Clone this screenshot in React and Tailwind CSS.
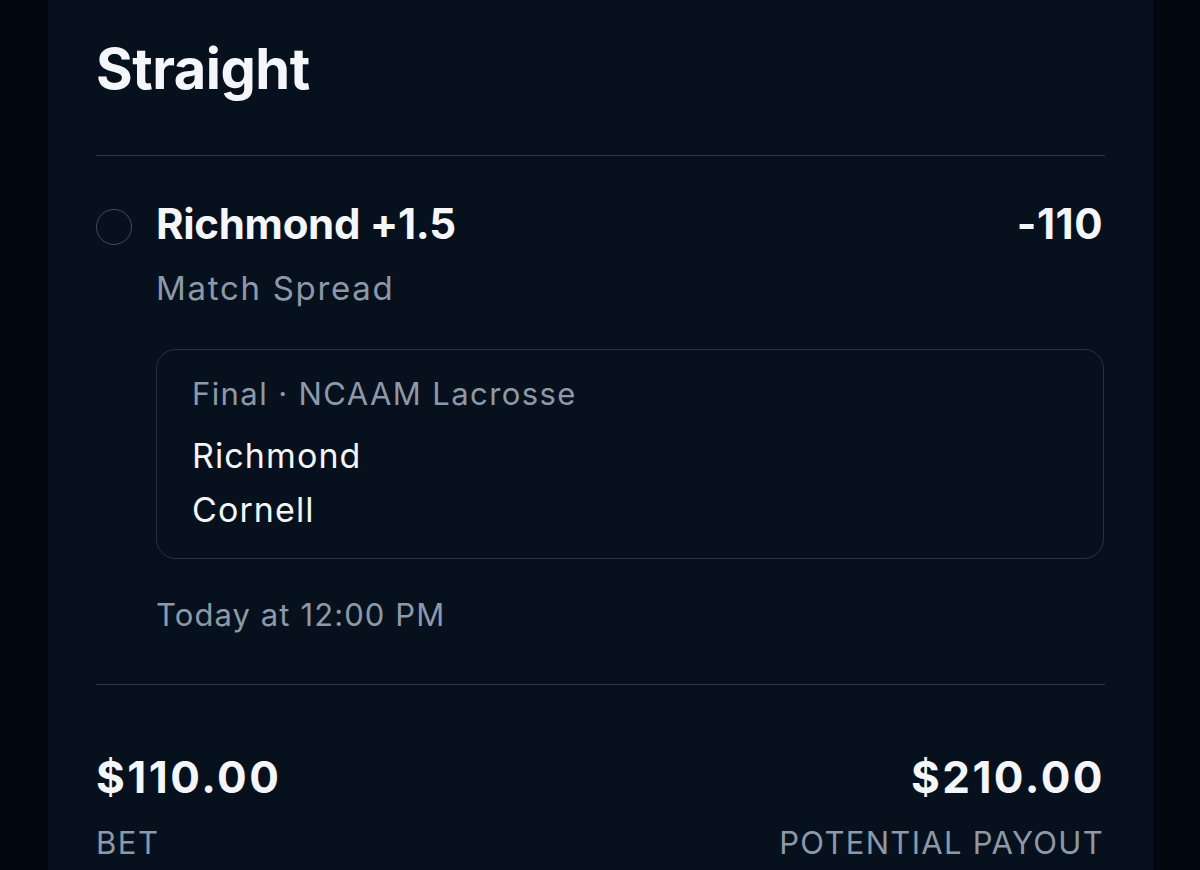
export default function App() {
  const font = { fontFamily: "Inter, 'Noto Sans', sans-serif" };
  return (
    <div className="w-[1200px] h-[870px] overflow-hidden bg-[#02070f] flex" style={font}>
      <div className="ml-[48px] w-[1105px] h-full bg-[#07111e] px-[48px] pt-[41px] flex flex-col">
        <div className="text-[56px] leading-[56px] font-bold text-[#f4f6f9] tracking-[-0.5px]">Straight</div>
        <div className="mt-[58px] h-px bg-[#2b3441]" />
        <div className="mt-[44px] flex items-start">
          <div className="mt-[9px] w-[36px] h-[36px] rounded-full border-[1.5px] border-[#424c5b] shrink-0" />
          <div className="ml-[24px] flex-1 flex flex-col">
            <div className="flex justify-between items-start">
              <div className="text-[42px] leading-[48px] font-bold text-[#f4f6f9] tracking-[-0.3px]">Richmond +1.5</div>
              <div className="text-[42px] leading-[48px] font-bold text-[#f4f6f9] mr-[2px] tracking-[0.5px]">-110</div>
            </div>
            <div className="mt-[20px] text-[33px] leading-[40px] text-[#8d99a8] tracking-[1.7px]">Match Spread</div>
            <div className="mt-[41px] mr-[1px] rounded-[20px] border-[1.5px] border-[#29323f] pt-[26px] pb-[21px] px-[35px] flex flex-col">
              <div className="text-[31px] leading-[36px] text-[#8d99a8] tracking-[1.4px]">Final · NCAAM Lacrosse</div>
              <div className="mt-[17px] text-[34px] leading-[54px] text-[#f4f6f9] tracking-[1.1px]">Richmond</div>
              <div className="text-[34px] leading-[54px] text-[#f4f6f9] tracking-[1.1px]">Cornell</div>
            </div>
            <div className="mt-[38px] text-[31px] leading-[36px] text-[#8d99a8] tracking-[1.1px]">Today at 12:00 PM</div>
          </div>
        </div>
        <div className="mt-[51px] h-px bg-[#2b3441]" />
        <div className="mt-[66px] flex justify-between items-start">
          <div className="flex flex-col">
            <div className="text-[44px] leading-[52px] font-bold text-[#f4f6f9] tracking-[2.5px]">$110.00</div>
            <div className="mt-[22px] text-[31px] leading-[36px] text-[#8d99a8] tracking-[1.5px]">BET</div>
          </div>
          <div className="flex flex-col items-end">
            <div className="text-[44px] leading-[52px] font-bold text-[#f4f6f9] tracking-[2.5px]">$210.00</div>
            <div className="mt-[22px] text-[31px] leading-[36px] text-[#8d99a8] tracking-[1.3px] mr-[1px]">POTENTIAL PAYOUT</div>
          </div>
        </div>
      </div>
    </div>
  );
}
